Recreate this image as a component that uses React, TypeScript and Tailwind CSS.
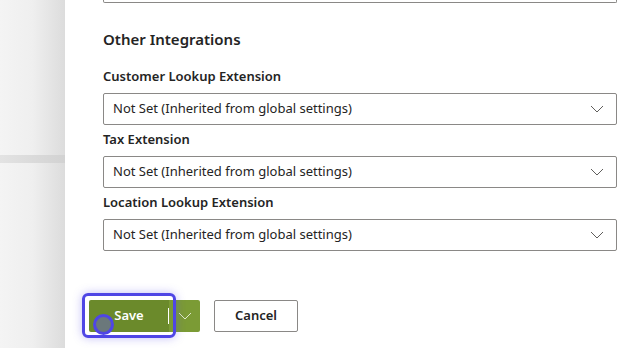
import React from "react";

const Chevron = ({ className = "" }: { className?: string }) => (
  <svg width="14" height="8" viewBox="0 0 14 8" className={className} fill="none">
    <path d="M1 1l6 6 6-6" stroke="currentColor" strokeWidth="1" />
  </svg>
);

const Select = ({ label, first = false }: { label: string; first?: boolean }) => (
  <div className={`flex flex-col ${first ? "" : "mt-[4px]"}`}>
    <div className="h-[20px] leading-[20px] text-[13px] font-semibold text-[#242424]">{label}</div>
    <div className="mt-[7px] h-[32px] border border-[#8a8886] rounded-[2px] flex items-center pl-[9px] pr-[12px] justify-between">
      <span className="text-[13px] text-[#242424]">Not Set (Inherited from global settings)</span>
      <Chevron className="text-[#605e5c]" />
    </div>
  </div>
);

export default function App() {
  return (
    <div
      className="w-[629px] h-[348px] flex overflow-hidden bg-white"
      style={{ fontFamily: '"Noto Sans", "Open Sans", sans-serif' }}
    >
      <div className="w-[65px] h-full bg-gradient-to-r from-[#f4f4f4] via-[#efefef] to-[#dcdcdc] flex flex-col">
        <div className="h-[155px]" />
        <div className="h-[8px] bg-gradient-to-r from-[#e3e3e3] to-[#d2d2d2]" />
      </div>
      <div className="flex-1 pl-[38px] pr-[12px] flex flex-col">
        <div className="h-[3px] border-x border-b border-[#8a8886] rounded-b-[2px]" />
        <div className="mt-[25px] h-[22px] leading-[22px] text-[15px] font-semibold text-[#242424]">
          Other Integrations
        </div>
        <div className="mt-[16px] flex flex-col">
          <Select label="Customer Lookup Extension" first />
          <Select label="Tax Extension" />
          <Select label="Location Lookup Extension" />
        </div>
        <div className="mt-[49px] flex items-center gap-[14px] ml-[-14px]">
          <div className="relative">
            <div className="flex h-[32px] rounded-[2px] overflow-hidden">
              <div className="w-[80px] bg-[#6b8a2b] text-white text-[13px] font-semibold flex items-center justify-center relative">
                Save
                <div className="absolute right-0 top-[8px] h-[16px] w-[1px] bg-white" />
              </div>
              <div className="w-[31px] bg-[#7b9b35] flex items-center justify-center text-[#dfe8cc]">
                <Chevron />
              </div>
            </div>
            <div className="absolute left-[-7px] top-[-7px] w-[94px] h-[45px] rounded-[6px] border-[3px] border-[#4f46e5] shadow-[0_0_10px_rgba(79,70,229,0.35)] pointer-events-none" />
            <div className="absolute left-[4px] top-[14px] w-[21px] h-[21px] rounded-full border-[3px] border-[#4f46e5] bg-[#6b7390]/80" />
          </div>
          <button className="w-[84px] h-[32px] border border-[#8a8886] rounded-[2px] bg-white text-[13px] font-semibold text-[#242424]">
            Cancel
          </button>
        </div>
      </div>
    </div>
  );
}
